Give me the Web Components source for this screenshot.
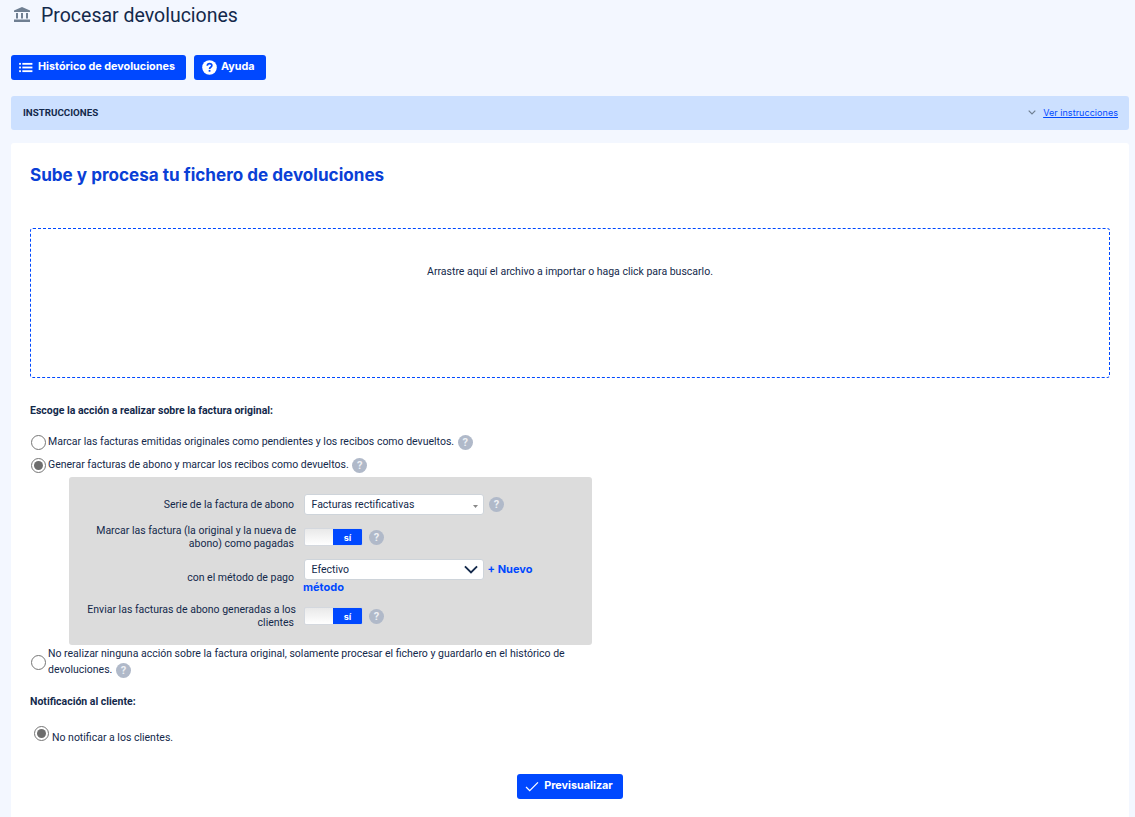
<!DOCTYPE html>
<html lang="es">
<head>
<meta charset="utf-8">
<title>Procesar devoluciones</title>
<style>
html, body { margin: 0; height: 817px; overflow: hidden; background: #f3f7ff; }
body { font-family: Roboto, "Liberation Sans", sans-serif; font-size: 10.5px; color: #13294b; }
</style>
</head>
<body>
<process-page></process-page>
<script>
const ICONS = {
  list: '<svg width="14" height="11" viewBox="0 0 15 12" fill="#fff"><rect x="0" y="1" width="2" height="2"/><rect x="0" y="5" width="2" height="2"/><rect x="0" y="9" width="2" height="2"/><rect x="3.5" y="1" width="11" height="2"/><rect x="3.5" y="5" width="11" height="2"/><rect x="3.5" y="9" width="11" height="2"/></svg>',
  help: '<svg width="15" height="15" viewBox="0 0 16 16"><circle cx="8" cy="8" r="7.8" fill="#fff"/><path d="M5.6 6.2c.1-1.5 1.1-2.3 2.5-2.3s2.4.8 2.4 2c0 1.9-2.4 1.8-2.4 3.6" fill="none" stroke="#0048ff" stroke-width="1.8"/><rect x="7.1" y="10.6" width="1.9" height="1.9" fill="#0048ff"/></svg>',
  check: '<svg width="14" height="11" viewBox="0 0 15 12" fill="none" stroke="#fff" stroke-width="1.4"><path d="M1 6.5 5 10.5 14 1.5"/></svg>',
  bank: '<svg width="16" height="15" viewBox="0 0 16 15" fill="#6f7f92"><path d="M8 0 16 3.4V5H0V3.4Z"/><rect x="2" y="6" width="2" height="5.5"/><rect x="7" y="6" width="2" height="5.5"/><rect x="12" y="6" width="2" height="5.5"/><rect x="0" y="12.5" width="16" height="2.5"/></svg>'
}

class AppButton extends HTMLElement {
  constructor() {
    super()
    this.attachShadow({ mode: 'open' }).innerHTML = `
<style>
:host { display: inline-flex; align-items: center; height: 25px; box-sizing: border-box; background: #0048ff; color: #fff; border-radius: 3px; padding: 0 11px 0 8px; gap: 5px; font-family: Inter, "Open Sans", sans-serif; font-weight: 700; font-size: 10.8px; white-space: nowrap; }
:host([icon="check"]) { padding-right: 10px; }
:host([icon="help"]) { gap: 4px; }
svg { display: block; }
span { position: relative; top: -1px; }
</style>
${ICONS[this.getAttribute('icon')] || ''}<span><slot></slot></span>`
  }
}
customElements.define('app-button', AppButton)

class HelpIcon extends HTMLElement {
  constructor() {
    super()
    this.attachShadow({ mode: 'open' }).innerHTML = `
<style>
:host { display: inline-flex; width: 15px; height: 15px; border-radius: 50%; background: #b0b9c9; color: #eef0f4; align-items: center; justify-content: center; font: 700 11px Roboto, sans-serif; vertical-align: middle; flex: none; }
</style>?`
  }
}
customElements.define('help-icon', HelpIcon)

class RadioMark extends HTMLElement {
  constructor() {
    super()
    this.attachShadow({ mode: 'open' }).innerHTML = `
<style>
:host { display: block; width: 15px; height: 15px; box-sizing: border-box; border: 1px solid #767676; border-radius: 50%; background: #fff; flex: none; position: relative; }
:host([checked])::after { content: ""; position: absolute; inset: 2px; border-radius: 50%; background: #6e6e6e; }
</style>`
  }
}
customElements.define('radio-mark', RadioMark)

class RadioOption extends HTMLElement {
  constructor() {
    super()
    const checked = this.hasAttribute('checked') ? 'checked' : ''
    this.attachShadow({ mode: 'open' }).innerHTML = `
<style>
:host { display: flex; align-items: center; gap: 2px; line-height: 16px; }
radio-mark { margin: 1px 0 0 1px; }
.text { flex: 1; }
</style>
<radio-mark ${checked}></radio-mark><div class="text"><slot></slot></div>`
  }
}
customElements.define('radio-option', RadioOption)

class ToggleSwitch extends HTMLElement {
  constructor() {
    super()
    this.attachShadow({ mode: 'open' }).innerHTML = `
<style>
:host { display: inline-flex; width: 59px; height: 18px; margin-right: 1px; box-sizing: border-box; border: 1px solid #d4d8de; border-radius: 2px; overflow: hidden; background: linear-gradient(#e9e9e9, #fff); flex: none; }
.off { flex: 1; }
.on { width: 29px; background: #0048ff; color: #fff; font: 700 9px Inter, sans-serif; display: flex; align-items: center; justify-content: center; }
</style>
<div class="off"></div><div class="on">sí</div>`
  }
}
customElements.define('toggle-switch', ToggleSwitch)

class SelectBox extends HTMLElement {
  constructor() {
    super()
    const arrow = this.getAttribute('arrow') === 'chevron'
      ? '<svg width="14" height="9" viewBox="0 0 15 9" fill="none" stroke="#13294b" stroke-width="2"><path d="M1 1.2 7.5 7.6 14 1.2"/></svg>'
      : '<svg class="small" width="5" height="3" viewBox="0 0 5 3" fill="#888"><path d="M0 0h5L2.5 3Z"/></svg>'
    this.attachShadow({ mode: 'open' }).innerHTML = `
<style>
:host { display: inline-flex; align-items: center; justify-content: space-between; width: 180px; height: 21px; box-sizing: border-box; background: #fff; border: 1px solid #ced4da; border-radius: 3px; padding: 0 5px 0 6.5px; flex: none; }
.small { margin: 4px 0 0 0; }
</style>
<span><slot></slot></span>${arrow}`
  }
}
customElements.define('select-box', SelectBox)

class FormRow extends HTMLElement {
  constructor() {
    super()
    this.attachShadow({ mode: 'open' }).innerHTML = `
<style>
:host { display: grid; grid-template-columns: 225px 1fr; column-gap: 10px; align-items: center; line-height: 13px; }
.label { text-align: right; }
.ctl { display: flex; align-items: center; gap: 5px; }
</style>
<div class="label"><slot name="label"></slot></div><div class="ctl"><slot></slot></div>`
  }
}
customElements.define('form-row', FormRow)

class PageHeader extends HTMLElement {
  constructor() {
    super()
    this.attachShadow({ mode: 'open' }).innerHTML = `
<style>
:host { display: flex; align-items: center; height: 30px; padding-left: 14px; gap: 11px; font-size: 19.5px; color: #13294b; }
svg { display: block; margin-top: -1px; }
</style>
${ICONS.bank}<slot></slot>`
  }
}
customElements.define('page-header', PageHeader)

class InstructionsBar extends HTMLElement {
  constructor() {
    super()
    this.attachShadow({ mode: 'open' }).innerHTML = `
<style>
:host { display: flex; align-items: center; justify-content: space-between; height: 34px; box-sizing: border-box; margin: 0 6px 0 11px; padding: 0 11px 0 12px; background: #cce0ff; border-radius: 3px; }
b { font-size: 9.75px; font-weight: 700; color: #13294b; position: relative; top: -1px; }
.link { display: flex; align-items: center; gap: 7px; position: relative; top: -1px; }
a { color: #0048ff; text-decoration: underline; font: 400 9px Inter, sans-serif; letter-spacing: .05px; }
</style>
<b>INSTRUCCIONES</b>
<div class="link"><svg width="8" height="5" viewBox="0 0 8 5" fill="none" stroke="#6f7f92" stroke-width="1.2"><path d="M.7.7 4 4 7.3.7"/></svg><a>Ver instrucciones</a></div>`
  }
}
customElements.define('instructions-bar', InstructionsBar)

class ProcessPage extends HTMLElement {
  constructor() {
    super()
    this.attachShadow({ mode: 'open' }).innerHTML = `
<style>
:host { display: block; }
.actions { display: flex; gap: 8px; padding: 25px 0 16px 11px; }
.card { margin: 13px 6px 0 11px; height: 674px; box-sizing: border-box; background: #fff; border-radius: 3px 3px 0 0; padding: 21px 19px 0; }
h2 { margin: 0; font: 700 17.1px/22px Inter, sans-serif; color: #0a3fd6; }
.drop { margin-top: 42px; height: 150px; box-sizing: border-box; border: 1px dashed #0048ff; border-radius: 3px; padding-top: 36px; text-align: center; line-height: 14px; }
.lead { font-weight: 700; margin: 26px 0 0; line-height: 14px; }
.opts { margin-top: 16px; width: 540px; }
.opts radio-option + radio-option { margin-top: 7px; }
.opts radio-option help-icon { margin-left: 1px; }
.panel { margin: 4px 0 1px 39px; width: 523px; height: 168px; box-sizing: border-box; background: #dcdcdc; border-radius: 3px; padding: 17px 0 0; display: flex; flex-direction: column; }
.over { margin-right: -2px; }
.pay { width: 236px; line-height: 15px; margin-left: -1px; }
.pay select-box { margin: 0 1px 0 1px; }
.new { color: #0048ff; font: 700 11px/15px Inter, sans-serif; }
.notif { margin-left: 4px; margin-top: 17px; display: flex; align-items: flex-start; gap: 3px; }
.notif span { padding-top: 5px; }
.foot { display: flex; justify-content: center; margin-top: 30px; }
</style>
<page-header>Procesar devoluciones</page-header>
<div class="actions">
  <app-button icon="list">Histórico de devoluciones</app-button>
  <app-button icon="help">Ayuda</app-button>
</div>
<instructions-bar></instructions-bar>
<section class="card">
  <h2>Sube y procesa tu fichero de devoluciones</h2>
  <div class="drop">Arrastre aquí el archivo a importar o haga click para buscarlo.</div>
  <p class="lead">Escoge la acción a realizar sobre la factura original:</p>
  <div class="opts">
    <radio-option>Marcar las facturas emitidas originales como pendientes y los recibos como devueltos. <help-icon></help-icon></radio-option>
    <radio-option checked>Generar facturas de abono y marcar los recibos como devueltos. <help-icon></help-icon></radio-option>
    <div class="panel">
      <form-row><span slot="label">Serie de la factura de abono</span><select-box>Facturas rectificativas</select-box><help-icon></help-icon></form-row>
      <form-row style="margin-top:9px"><span slot="label"><span class="over">Marcar las factura (la original y la nueva de</span><br>abono) como pagadas</span><toggle-switch></toggle-switch><help-icon></help-icon></form-row>
      <form-row style="margin-top:9px"><span slot="label">con el método de pago</span><div class="pay"><select-box arrow="chevron">Efectivo</select-box> <span class="new">+ Nuevo</span> <span class="new">método</span></div></form-row>
      <form-row style="margin-top:8px"><span slot="label"><span class="over">Enviar las facturas de abono generadas a los</span><br>clientes</span><toggle-switch></toggle-switch><help-icon></help-icon></form-row>
    </div>
    <radio-option>No realizar ninguna acción sobre la factura original, solamente procesar el fichero y guardarlo en el histórico de devoluciones. <help-icon></help-icon></radio-option>
  </div>
  <p class="lead" style="margin-top:17px">Notificación al cliente:</p>
  <div class="notif"><radio-mark checked></radio-mark><span>No notificar a los clientes.</span></div>
  <div class="foot"><app-button icon="check">Previsualizar</app-button></div>
</section>`
  }
}
customElements.define('process-page', ProcessPage)
</script>
</body>
</html>
